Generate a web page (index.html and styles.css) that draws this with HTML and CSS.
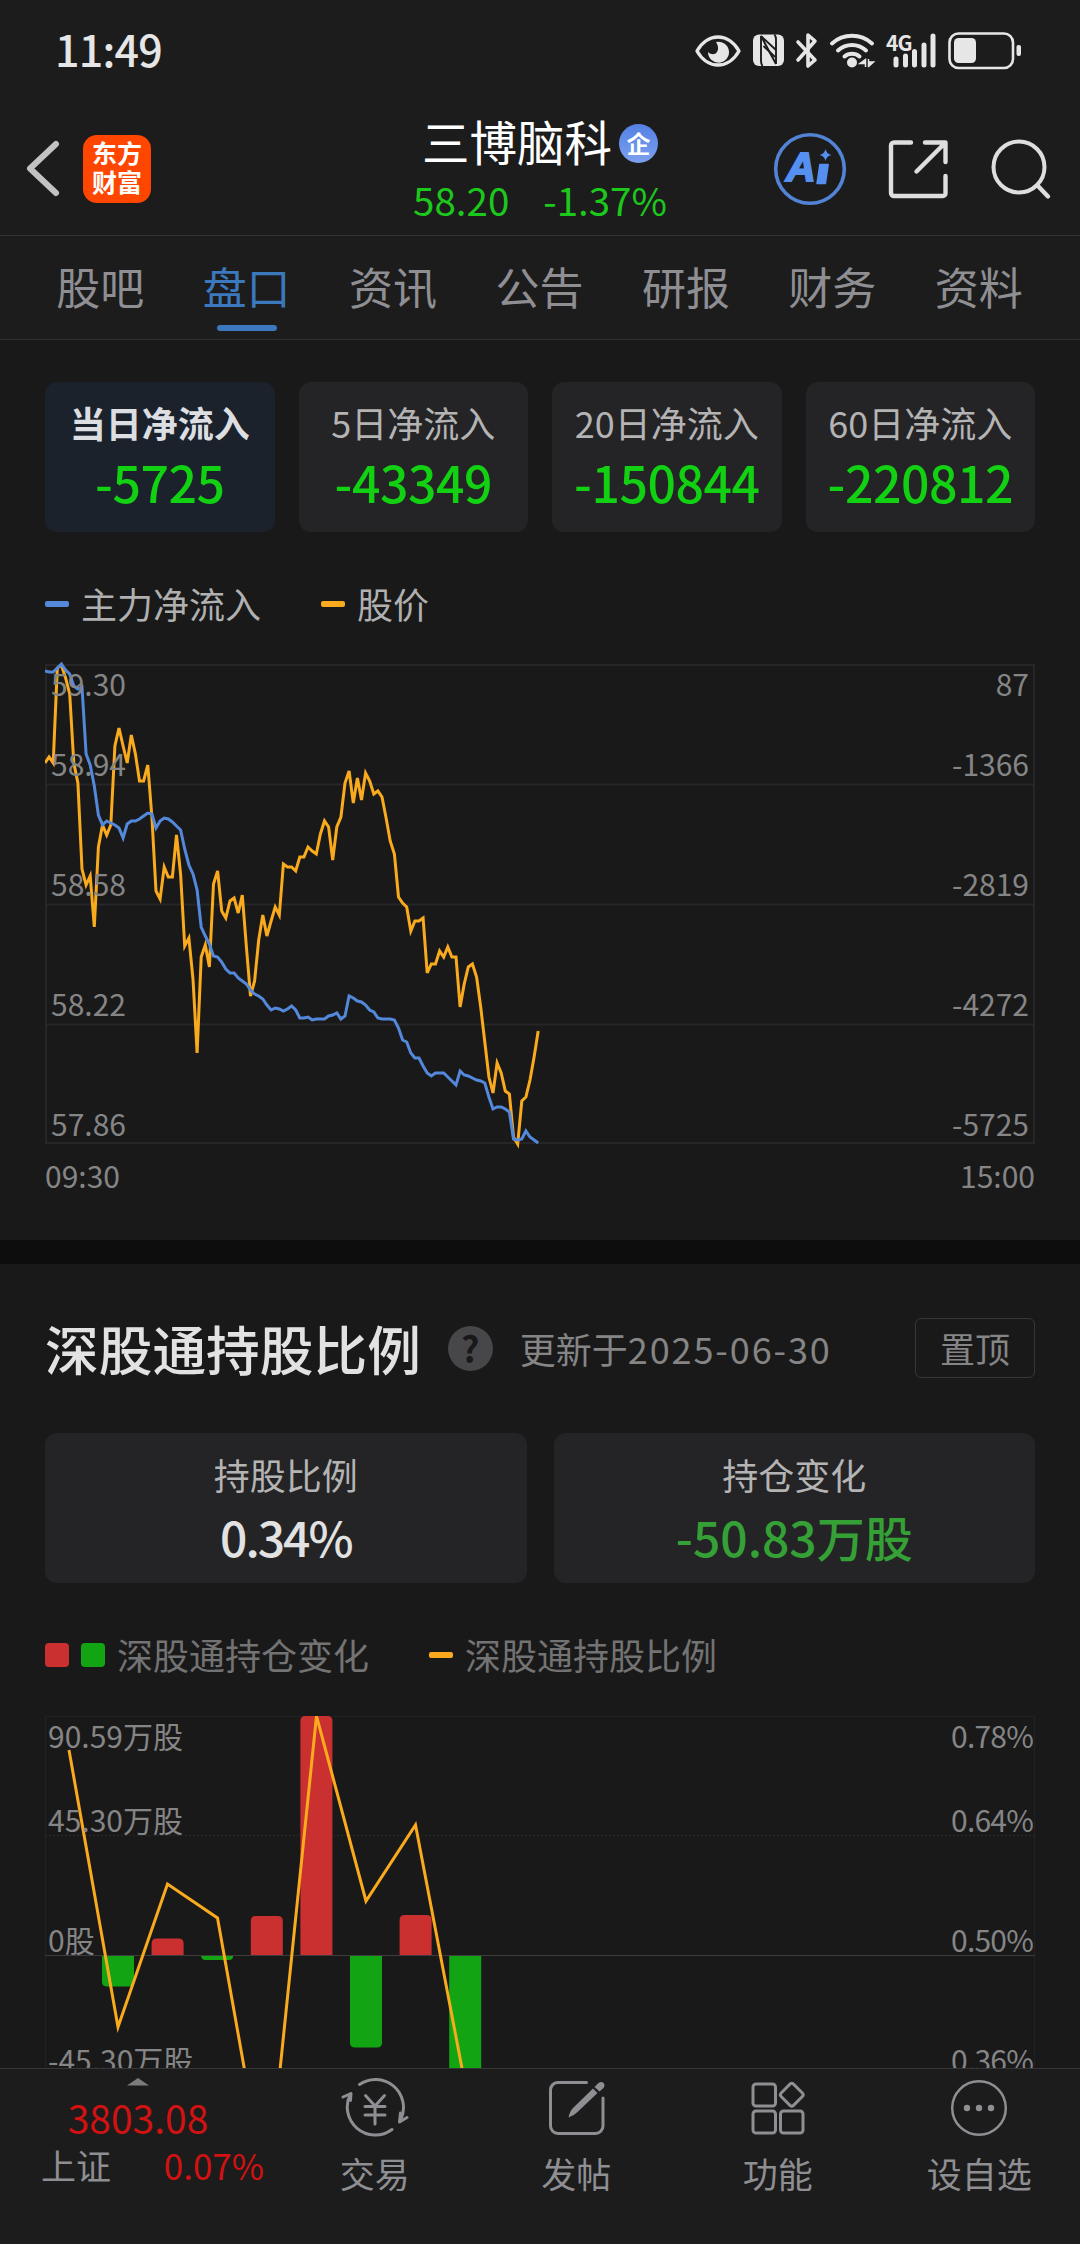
FILE: index.html
```html
<!DOCTYPE html>
<html lang="zh-CN">
<head>
    <meta charset="UTF-8">
    <meta name="viewport" content="width=device-width, initial-scale=1.0">
    <title>三博脑科 - 盘口</title>
    <link rel="stylesheet" href="styles.css">
</head>
<body>

<div class="page">
    <div class="status-bar">
        <span class="time">11:49</span>
        <svg class="status-icons" width="328" height="44" viewBox="694 28 328 44">
            <!-- eye -->
            <path d="M697 51c5-9 13-14 21-14s16 5 21 14c-5 9-13 14-21 14s-16-5-21-14z" fill="none" stroke="#e6e6e6" stroke-width="3.4" stroke-linejoin="round"/>
            <path d="M716 42a10.500 10.500 0 1 1-8 10c3 3 7 3 9 0 2-3 1-7-1-10z" fill="#e6e6e6"/>
            <!-- nfc -->
            <rect x="753" y="34.500" width="31" height="31.500" rx="6" fill="#e6e6e6"/>
            <path d="M762.500 66q-1.500-2-1.500-5V36l15 28M761 36l15 14M774.500 34.500q1.500 2 1.500 5V64" fill="none" stroke="#1c1c1c" stroke-width="1.900"/>
            <path d="M763.500 46l11.500 11" stroke="#1c1c1c" stroke-width="1.900"/>
            <!-- bluetooth -->
            <path d="M798 42l17 18-7 6V35l7 6-17 19" fill="none" stroke="#e6e6e6" stroke-width="3.600" stroke-linejoin="round" stroke-linecap="round"/>
            <!-- wifi -->
            <path d="M832 43.500a30 30 0 0 1 40 0M838 50.500a20.500 20.500 0 0 1 28 0M844.500 56.500a11.500 11.500 0 0 1 15 0" fill="none" stroke="#e6e6e6" stroke-width="4" stroke-linecap="round"/>
            <circle cx="852" cy="62.500" r="5" fill="#e6e6e6"/>
            <path d="M860 63.500h5.500v-4zM865.500 59v8M873.500 62h-4.500v4zM868.500 59v8" fill="#e6e6e6" stroke="#e6e6e6" stroke-width="1.500"/>
            <!-- signal -->
            <text x="886" y="50.500" class="net">4G</text>
            <path d="M896 59v6M905.500 56v9M914.500 51.500v13.500M924 45v20M933 36v29" stroke="#e6e6e6" stroke-width="5" stroke-linecap="round"/>
            <!-- battery -->
            <rect x="949.500" y="33.500" width="63.500" height="34.500" rx="9" fill="none" stroke="#e6e6e6" stroke-width="2.600"/>
            <rect x="954" y="38" width="22" height="25" rx="4.500" fill="#e6e6e6"/>
            <rect x="1016.500" y="45" width="4.500" height="11" rx="2" fill="#e6e6e6"/>
        </svg>
    </div>

    <header class="header">
        <div class="header-left">
            <svg class="back" width="34" height="58" viewBox="0 0 34 58">
                <path d="M30 5L4 29.500l26 24.500" fill="none" stroke="#c2c2c2" stroke-width="6" stroke-linecap="round" stroke-linejoin="round"/>
            </svg>
            <div class="logo"><span>东方</span><span>财富</span></div>
        </div>
        <div class="stock">
            <div class="stock-name">三博脑科<span class="badge">企</span></div>
            <div class="stock-price"><span>58.20</span><span>-1.37%</span></div>
        </div>
        <div class="header-right">
            <svg width="74" height="74" viewBox="0 0 74 74">
                <circle cx="37" cy="37" r="34.300" fill="none" stroke="#5283d4" stroke-width="3.600"/>
                <text x="13" y="49" class="ai">A</text>
                <path d="M46.800 32.500h8.400l-2.800 19h-8.400z" fill="#5590f0" stroke="#5590f0" stroke-width="1.500" stroke-linejoin="round"/>
                <path d="M52.500 17q1 5 6 6-5 1-6 6-1-5-6-6 5-1 6-6z" fill="#5590f0"/>
            </svg>
            <svg width="60" height="60" viewBox="0 0 60 60">
                <path d="M23 3.500H6a3 3 0 0 0-3 3V54a3 3 0 0 0 3 3h49a2.500 2.500 0 0 0 2.500-2.500V37M37 3.500h20.500V23M56 5L28.500 32.500" fill="none" stroke="#dedede" stroke-width="4.400" stroke-linecap="round" stroke-linejoin="round"/>
            </svg>
            <svg class="search" width="62" height="62" viewBox="0 0 62 62">
                <circle cx="28" cy="29" r="25.500" fill="none" stroke="#dedede" stroke-width="4"/>
                <path d="M46.500 47.500L57 58.500" stroke="#dedede" stroke-width="4.400" stroke-linecap="round"/>
            </svg>
        </div>
    </header>

    <nav class="tabs">
        <div class="tab">股吧</div>
        <div class="tab active">盘口</div>
        <div class="tab">资讯</div>
        <div class="tab">公告</div>
        <div class="tab">研报</div>
        <div class="tab">财务</div>
        <div class="tab">资料</div>
    </nav>

    <main class="content">
        <section class="flow">
            <div class="cards">
                <div class="card active"><div class="label">当日净流入</div><div class="value green">-5725</div></div>
                <div class="card"><div class="label">5日净流入</div><div class="value green">-43349</div></div>
                <div class="card"><div class="label">20日净流入</div><div class="value green">-150844</div></div>
                <div class="card"><div class="label">60日净流入</div><div class="value green">-220812</div></div>
            </div>
            <div class="legend">
                <i class="dash blue"></i><span>主力净流入</span>
                <i class="dash orange second"></i><span>股价</span>
            </div>
            <svg class="flow-chart" width="990" height="540" viewBox="0 -5 990 540">
                <path d="M0 0h990M0 119.500h990M0 239.500h990M0 359.500h990M0 478h990M1 0v478M989 0v478" fill="none" stroke="#262628" stroke-width="2"/>
                <polyline id="price" class="line" stroke="#f9ab1d"/>
                <polyline id="inflow" class="line" stroke="#5488db"/>
                <g class="axis">
                    <text x="6" y="31">59.30</text>
                    <text x="6" y="111">58.94</text>
                    <text x="6" y="231">58.58</text>
                    <text x="6" y="351">58.22</text>
                    <text x="6" y="471">57.86</text>
                    <text x="0" y="523">09:30</text>
                </g>
                <g class="axis end">
                    <text x="984" y="31">87</text>
                    <text x="984" y="111">-1366</text>
                    <text x="984" y="231">-2819</text>
                    <text x="984" y="351">-4272</text>
                    <text x="984" y="471">-5725</text>
                    <text x="990" y="523">15:00</text>
                </g>
            </svg>
        </section>

        <section class="holding">
            <div class="title-row">
                <h2>深股通持股比例</h2>
                <span class="help">?</span>
                <span class="updated">更新于<span class="date">2025-06-30</span></span>
                <button class="pin">置顶</button>
            </div>
            <div class="cards wide">
                <div class="card"><div class="label">持股比例</div><div class="value ratio">0.34%</div></div>
                <div class="card"><div class="label">持仓变化</div><div class="value down">-50.83万股</div></div>
            </div>
            <div class="legend dim">
                <i class="box red"></i><i class="box green-box"></i><span>深股通持仓变化</span>
                <i class="dash orange third"></i><span>深股通持股比例</span>
            </div>
            <svg class="holding-chart" width="990" height="480" viewBox="0 0 990 480">
                <path d="M0 .5h990M.5 0v480M989.500 0v480" fill="none" stroke="#222224"/>
                <path d="M0 119.500h990" stroke="#29292b" stroke-dasharray="2 2"/>
                <g id="bars"></g>
                <path d="M0 239.500h990" stroke="#3c3c3e"/>
                <polyline points="24,34 73,311 122.500,168 172.500,202 222,480 271.500,0 321,185 370.500,109 420,368" class="line" stroke="#f9ab1d"/>
                <g class="axis">
                    <text x="3" y="32">90.59万股</text>
                    <text x="3" y="116">45.30万股</text>
                    <text x="3" y="236">0股</text>
                    <text x="3" y="356">-45.30万股</text>
                </g>
                <g class="axis end percent">
                    <text x="988" y="32">0.78%</text>
                    <text x="988" y="116">0.64%</text>
                    <text x="988" y="236">0.50%</text>
                    <text x="988" y="356">0.36%</text>
                </g>
            </svg>
        </section>
    </main>

    <footer class="bottom-bar">
        <div class="index">
            <svg width="22" height="8" viewBox="0 0 22 8"><path d="M11 0l11 7.500H0z" fill="#7c7c7e"/></svg>
            <div class="points">3803.08</div>
            <div class="index-row"><span>上证</span><span class="pct">0.07%</span></div>
        </div>
        <div class="item">
            <svg width="68" height="60" viewBox="0 0 68 60">
                <path d="M18.500 6.500A28 28 0 0 1 60 41M9.500 16A28 28 0 0 0 51 51.500" class="icon"/>
                <path d="M2 19l8-3.500-.5 7M66 39.500l-7.500 4.500 1-9" class="icon"/>
                <path d="M24.500 17.500L34 28l9.500-10.500M34 28v18M24 28.500h20M24 37h20" class="icon"/>
            </svg>
            <span>交易</span>
        </div>
        <div class="item">
            <svg width="60" height="60" viewBox="-1.500 0 60 60">
                <path d="M39 4.500H10A7.500 7.500 0 0 0 3 12v36A7.500 7.500 0 0 0 10.500 55.500H48A7.500 7.500 0 0 0 55.500 48V20" class="icon"/>
                <path d="M21 39.500q1.500-6.500 4-9L45.500 10.500l4.500 4.500L29.500 34.500q-3 3-8.500 5zM47 9l4-4q3-2 5 0t0 5l-4 3.500z" fill="#8e8e93"/>
            </svg>
            <span>发帖</span>
        </div>
        <div class="item">
            <svg width="60" height="60" viewBox="0 0 60 60">
                <rect x="5" y="6" width="22.500" height="22" rx="3" class="icon"/>
                <rect x="5" y="33" width="22.500" height="22" rx="3" class="icon"/>
                <rect x="32.500" y="33" width="22.500" height="22" rx="3" class="icon"/>
                <rect x="35" y="8" width="17.500" height="17.500" rx="2.500" transform="rotate(45 43.750 16.750)" class="icon"/>
            </svg>
            <span>功能</span>
        </div>
        <div class="item">
            <svg width="60" height="60" viewBox="0 0 60 60">
                <circle cx="30" cy="30" r="26.800" class="icon thin"/>
                <circle cx="18" cy="30" r="3.200" fill="#8e8e93"/>
                <circle cx="30" cy="30" r="3.200" fill="#8e8e93"/>
                <circle cx="42" cy="30" r="3.200" fill="#8e8e93"/>
            </svg>
            <span>设自选</span>
        </div>
    </footer>
</div>

<script src="chart.js"></script>
</body>
</html>
```
FILE: styles.css
```css
* {
    box-sizing: border-box;
}
body {
    margin: 0;
    background: #19191a;
    font-family: "Noto Sans CJK SC", sans-serif;
}
.page {
    width: 1080px;
    height: 2244px;
    display: flex;
    flex-direction: column;
    overflow: hidden;
}
svg {
    display: block;
    flex: none;
}

/* status bar */
.status-bar {
    height: 104px;
    flex: none;
    background: #1c1c1c;
    display: flex;
    justify-content: space-between;
    padding: 28px 58px 0 55px;
    color: #e6e6e6;
}
.time {
    font-size: 43px;
    line-height: 41px;
    font-weight: 500;
    letter-spacing: -0.800px;
}
.net {
    font-size: 21px;
    font-weight: 700;
    fill: #e6e6e6;
    letter-spacing: -1px;
}

/* header */
.header {
    height: 132px;
    flex: none;
    background: #1c1c1c;
    border-bottom: 1px solid #333335;
    display: flex;
    justify-content: space-between;
}
.header-left {
    width: 360px;
    display: flex;
    padding: 31px 0 0 26px;
}
.back {
    margin-top: 4px;
}
.logo {
    width: 68px;
    height: 68px;
    margin-left: 23px;
    padding-top: 3px;
    border-radius: 14px;
    background: #ff4600;
    color: #fff;
    font-size: 25px;
    font-weight: 700;
    line-height: 29px;
    text-align: center;
}
.logo span {
    display: block;
}
.stock {
    width: 360px;
    padding-top: 10px;
}
.stock-name {
    display: flex;
    align-items: center;
    justify-content: center;
    height: 54px;
    font-size: 47.500px;
    line-height: 54px;
    color: #fff;
}
.badge {
    width: 39px;
    height: 39px;
    margin: 5px 0 0 7px;
    border-radius: 50%;
    background: linear-gradient(#5580e4, #7ba1ee);
    font-size: 24px;
    font-weight: 700;
    line-height: 37px;
    text-align: center;
}
.stock-price {
    display: flex;
    justify-content: center;
    gap: 34px;
    font-size: 38.500px;
    line-height: 44px;
    margin-top: 9px;
    color: #1dc81d;
}
.header-right {
    width: 360px;
    display: flex;
    align-items: center;
    justify-content: flex-end;
    gap: 41px;
    padding: 0 27px 2px 0;
}
.search {
    margin-left: 2px;
}
.ai {
    font-family: "Liberation Sans", sans-serif;
    font-size: 41px;
    font-weight: 700;
    font-style: italic;
    fill: #5590f0;
    stroke: #5590f0;
    stroke-width: 2px;
}

/* tabs */
.tabs {
    height: 104px;
    flex: none;
    background: #1c1c1c;
    border-bottom: 1px solid #303032;
    display: flex;
    padding: 0 28px 0 27px;
}
.tab {
    flex: 1;
    display: flex;
    flex-direction: column;
    align-items: center;
    padding-top: 19px;
    font-size: 44px;
    line-height: 62px;
    color: #8e8e93;
}
.tab.active {
    color: #3b78be;
}
.tab.active::after {
    content: "";
    width: 60px;
    height: 6px;
    margin-top: 8px;
    border-radius: 3px;
    background: #3b78be;
}

/* content */
.content {
    flex: 1;
    min-height: 0;
    overflow: hidden;
}
.flow {
    height: 900px;
    padding: 42px 45px 0;
}
.cards {
    display: flex;
    gap: 24px;
}
.card {
    flex: 1;
    height: 150px;
    padding-top: 15px;
    border-radius: 12px;
    background: #242426;
    text-align: center;
    white-space: nowrap;
}
.card.active {
    background: #1b222b;
}
.label {
    font-size: 36px;
    line-height: 50px;
    color: #b4b4b4;
}
.card.active .label {
    color: #dcdee2;
    font-weight: 700;
}
.value {
    font-size: 50px;
    line-height: 60px;
    margin-top: 4px;
    font-weight: 500;
    letter-spacing: -0.500px;
    color: #e2e2e2;
}
.value.green {
    color: #12d012;
}
.value.ratio {
    font-size: 48px;
    letter-spacing: -2px;
}
.value.down {
    color: #35a035;
    font-size: 48px;
    letter-spacing: 0;
}
.legend {
    display: flex;
    align-items: center;
    height: 52px;
    margin-top: 46px;
    font-size: 36px;
    line-height: 50px;
    color: #b0b0b0;
}
.legend span {
    height: 52px;
}
.legend.dim {
    color: #737373;
}
.dash {
    width: 24px;
    height: 6px;
    margin-right: 12px;
    border-radius: 2px;
}
.blue {
    background: #5488db;
}
.orange {
    background: #f9ab1d;
}
.second {
    margin-left: 60px;
}
.third {
    margin-left: 60px;
}
.box {
    width: 24px;
    height: 24px;
    margin-right: 12px;
    border-radius: 4px;
}
.red {
    background: #ca3030;
}
.green-box {
    background: #13a413;
}
.flow-chart {
    margin-top: 30px;
}
.line {
    fill: none;
    stroke-width: 3px;
}
.axis {
    font-size: 30px;
    fill: #858585;
}
.axis.end {
    text-anchor: end;
}
.axis.percent {
    letter-spacing: -0.800px;
}

/* holding */
.holding {
    border-top: 24px solid #0d0d0d;
    padding: 54px 45px 0;
}
.title-row {
    display: flex;
    align-items: center;
    height: 60px;
}
h2 {
    margin: 0;
    font-size: 53.700px;
    line-height: 60px;
    font-weight: 500;
    color: #e2e2e2;
}
.help {
    width: 45px;
    height: 45px;
    margin-left: 27px;
    border-radius: 50%;
    background: #47474a;
    color: #19191a;
    font-size: 36px;
    font-weight: 700;
    line-height: 42px;
    text-align: center;
}
.updated {
    margin-left: 27px;
    font-size: 36px;
    line-height: 56px;
    color: #858585;
}
.date {
    letter-spacing: 1.900px;
}
.pin {
    width: 120px;
    height: 60px;
    margin-left: auto;
    padding: 0;
    border: 1px solid #363638;
    border-radius: 6px;
    background: none;
    color: #858585;
    font: 35px/56px "Noto Sans CJK SC", sans-serif;
}
.cards.wide {
    gap: 27px;
    margin-top: 55px;
}
.cards.wide .card {
    padding-top: 16px;
}
.cards.wide .value {
    margin-top: 7px;
}
.holding-chart {
    margin-top: 35px;
}

/* bottom bar */
.bottom-bar {
    height: 176px;
    flex: none;
    display: flex;
    background: #1c1c1c;
    border-top: 1px solid #363638;
    color: #8e8e93;
    font-size: 35px;
}
.index {
    width: 274px;
    display: flex;
    flex-direction: column;
    align-items: center;
    padding: 9px 0 0 2px;
}
.points {
    margin-top: 7px;
    font-size: 39px;
    line-height: 48px;
    color: #d01212;
}
.index-row {
    display: flex;
    width: 272px;
    line-height: 48px;
    padding: 0 10px 0 39px;
    justify-content: space-between;
}
.pct {
    font-size: 35px;
    color: #d01212;
}
.item {
    flex: 1;
    display: flex;
    flex-direction: column;
    align-items: center;
    padding-top: 9px;
}
.item span {
    margin-top: 11px;
    line-height: 48px;
}
.icon {
    fill: none;
    stroke: #8e8e93;
    stroke-width: 3px;
    stroke-linecap: round;
    stroke-linejoin: round;
}
.icon.thin {
    stroke-width: 2.500px;
}
```
FILE: chart.js
```js
// one value per minute, offset from the top of the plot
const price = [
    98, 92, 98, 3, 0, 13, 29, 98, 118, 204, 220, 211, 262, 182, 160, 170, 160, 81, 63, 81,
    98, 70, 89, 116, 116, 100, 152, 226, 234, 202, 212, 212, 170, 209, 281, 273, 314, 388, 292, 280,
    302, 219, 206, 246, 253, 236, 233, 248, 230, 282, 331, 316, 275, 250, 271, 256, 242, 250, 199, 202,
    202, 206, 192, 192, 182, 186, 189, 169, 156, 162, 195, 162, 152, 118, 106, 138, 113, 135, 108, 116,
    129, 126, 132, 153, 176, 189, 232, 238, 242, 266, 256, 256, 253, 308, 299, 299, 286, 292, 282, 292,
    292, 342, 319, 302, 299, 312, 342, 377, 412, 428, 398, 408, 426, 429, 472, 479, 436, 432, 415, 392, 366
];
const inflow = [
    6, 7, 7, 3, -1, 5, 9, 21, 24, 22, 89, 100, 121, 150, 160, 156, 158, 160, 163, 173,
    159, 156, 156, 154, 151, 148, 149, 163, 156, 153, 154, 157, 161, 165, 184, 200, 209, 225, 262, 271,
    279, 291, 292, 297, 304, 308, 308, 313, 316, 319, 325, 329, 331, 334, 340, 345, 343, 344, 346, 344,
    341, 345, 353, 353, 352, 355, 354, 354, 354, 351, 350, 348, 354, 351, 331, 333, 336, 337, 340, 345,
    347, 353, 354, 354, 354, 355, 363, 375, 377, 388, 393, 393, 401, 408, 411, 408, 408, 408, 412, 416,
    420, 406, 410, 411, 413, 415, 416, 418, 432, 444, 442, 442, 444, 447, 474, 475, 474, 466, 472, 475, 478
];

function drawLine(id, values) {
    const points = values.map((y, i) => (i * 4.11).toFixed(1) + ',' + y).join(' ');
    document.getElementById(id).setAttribute('points', points);
}

drawLine('price', price);
drawLine('inflow', inflow);

// holding changes: bar height, negative goes below zero
const changes = [-31, 17, -4.5, 39.5, 239.5, -92, 40.5, -239];
const bars = document.getElementById('bars');
changes.forEach((h, i) => {
    const x = 57 + i * 49.6;
    const r = Math.min(5, Math.abs(h));
    const s = h > 0 ? -1 : 1;
    const bar = document.createElementNS('http://www.w3.org/2000/svg', 'path');
    const y = 239.5 + s * Math.abs(h);
    bar.setAttribute('d', `M${x} 239.5V${y - s * r}Q${x} ${y} ${x + r} ${y}H${x + 32 - r}Q${x + 32} ${y} ${x + 32} ${y - s * r}V239.5z`);
    bar.setAttribute('fill', h > 0 ? '#ca3030' : '#13a413');
    bars.appendChild(bar);
});
```
